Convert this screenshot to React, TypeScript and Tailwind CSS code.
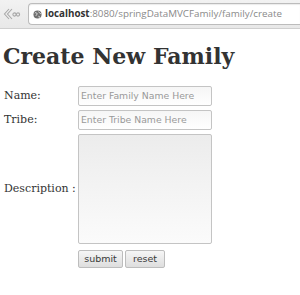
import React from "react";

export default function App() {
  return (
    <div className="w-[300px] h-[295px] bg-white overflow-hidden">
      <div className="h-[29px] bg-gradient-to-b from-[#f2f2f2] to-[#e8e8e8] border-b border-[#cfcfcf] flex items-center">
        <div className="w-[28px] shrink-0 flex items-center justify-start pl-[3px]">
          <svg width="18" height="14" viewBox="0 0 18 14" fill="none" stroke="#a8a8a8" strokeWidth="1.1">
            <path d="M6 2 L1.5 7 L6 12" />
            <path d="M9 2 L4.5 7 L9 12" />
            <circle cx="11.5" cy="7.5" r="1.6" />
            <circle cx="15" cy="7.5" r="1.6" />
          </svg>
        </div>
        <div className="flex-1 h-[22px] bg-white border border-[#bcbcbc] rounded-l-[4px] border-r-0 flex items-center pl-[4px] shadow-[inset_0_1px_1px_rgba(0,0,0,0.08)] overflow-hidden">
          <svg width="9" height="9" viewBox="0 0 10 10" className="mr-[3px] shrink-0">
            <circle cx="5" cy="5" r="4.5" fill="#707070" />
            <path d="M2 3.5 C3 2.5 4 3 4.5 4 C5 5 3.5 5.5 3 6.5 M6 2 C7 3 8 3 8.5 4.5 M6 7 C7 6.5 7.5 7.5 7 8.5" stroke="#fff" strokeWidth="0.9" fill="none" />
          </svg>
          <span className="text-[9.8px] whitespace-nowrap font-['Open_Sans',sans-serif]">
            <span className="font-bold text-[#333]">localhost</span>
            <span className="text-[#8a8a8a]">:8080/springDataMVCFamily/family/create</span>
          </span>
        </div>
      </div>

      <h1 className="font-['DejaVu_Serif',serif] font-bold text-[22px] leading-none text-[#333] pl-[3px] mt-[16px]">
        Create New Family
      </h1>

      <div className="grid grid-cols-[70px_auto] gap-x-[4px] mt-[19px] pl-[4px] font-['DejaVu_Serif',serif] text-[11px] text-[#333]">
        <div className="h-[20px] flex items-center whitespace-nowrap">Name:</div>
        <div className="h-[20px] w-[134px] border border-[#c4c4c4] rounded-[2px] bg-gradient-to-b from-[#f6f6f6] to-white flex items-center pl-[2px] font-['DejaVu_Sans',sans-serif] text-[9.3px] text-[#999]">
          Enter Family Name Here
        </div>
        <div className="h-[20px] mt-[4px] flex items-center whitespace-nowrap">Tribe:</div>
        <div className="h-[20px] mt-[4px] w-[134px] border border-[#c4c4c4] rounded-[2px] bg-gradient-to-b from-[#f6f6f6] to-white flex items-center pl-[2px] font-['DejaVu_Sans',sans-serif] text-[9.3px] text-[#999]">
          Enter Tribe Name Here
        </div>
        <div className="mt-[4px] flex items-center whitespace-nowrap">Description :</div>
        <div className="mt-[4px] h-[110px] w-[134px] border border-[#c4c4c4] rounded-[2px] bg-gradient-to-b from-[#ececec] to-[#fbfbfb]"></div>
        <div></div>
        <div className="mt-[6px] flex gap-[2px] font-['DejaVu_Sans',sans-serif] text-[9.5px] text-[#3a3a3a]">
          <div className="w-[45px] h-[18px] border border-[#bdbdbd] rounded-[2px] bg-gradient-to-b from-[#f6f6f6] to-[#dedede] flex items-center justify-center">submit</div>
          <div className="w-[40px] h-[18px] border border-[#bdbdbd] rounded-[2px] bg-gradient-to-b from-[#f6f6f6] to-[#dedede] flex items-center justify-center">reset</div>
        </div>
      </div>
    </div>
  );
}
